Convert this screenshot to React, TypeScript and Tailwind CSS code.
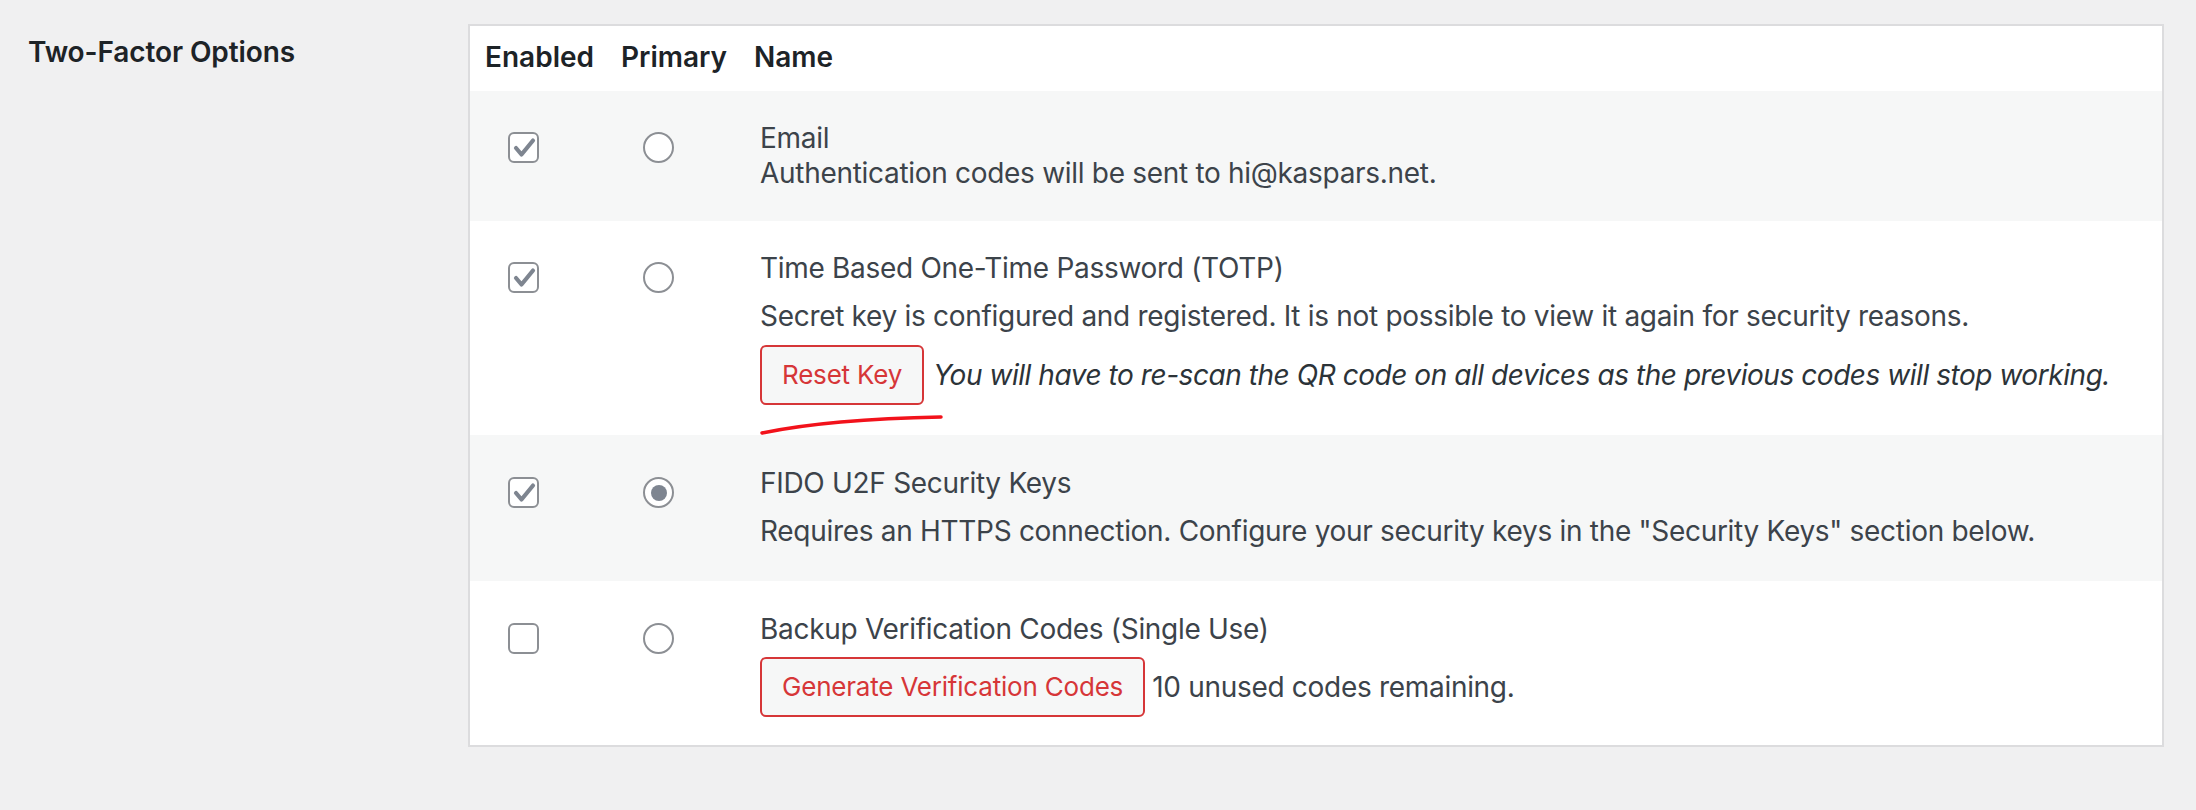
import React from "react";

type Method = {
  id: string;
  enabled: boolean;
  primary: boolean;
  alt: boolean;
};

function Checkbox({ checked }: { checked: boolean }) {
  return (
    <span className="mt-[11px] flex h-[31px] w-[31px] items-center justify-center rounded-[6px] border-2 border-[#8c8f94] bg-white">
      {checked && (
        <svg width="31" height="31" viewBox="0 0 31 31" className="-m-[2px]">
          <polyline
            points="8,16 13.5,22.5 25,8.5"
            fill="none"
            stroke="#7e8590"
            strokeWidth="4.2"
            strokeLinecap="round"
            strokeLinejoin="round"
          />
        </svg>
      )}
    </span>
  );
}

function Radio({ checked }: { checked: boolean }) {
  return (
    <span className="mt-[11px] flex h-[31px] w-[31px] items-center justify-center rounded-full border-2 border-[#8c8f94] bg-white">
      {checked && <span className="h-[16px] w-[16px] rounded-full bg-[#7e8590]" />}
    </span>
  );
}

function RedButton({ children }: { children: React.ReactNode }) {
  return (
    <button className="h-[60px] shrink-0 rounded-[6px] border-2 border-[#d63638] bg-[#f6f7f7] px-[20px] text-[26px] leading-[56px] tracking-[-0.2px] text-[#d63638]">
      {children}
    </button>
  );
}

function Row({
  method,
  pad,
  children,
}: {
  method: Method;
  pad: string;
  children: React.ReactNode;
}) {
  return (
    <div className={`flex ${pad} ${method.alt ? "bg-[#f6f7f7]" : "bg-white"}`}>
      <div className="w-[136px] shrink-0 pl-[38px]">
        <Checkbox checked={method.enabled} />
      </div>
      <div className="w-[134px] shrink-0 pl-[37px]">
        <Radio checked={method.primary} />
      </div>
      <div className="flex-1 pl-[20px] tracking-[-0.3px] text-[#3c434a]">{children}</div>
    </div>
  );
}

const methods: Record<string, Method> = {
  email: { id: "email", enabled: true, primary: false, alt: true },
  totp: { id: "totp", enabled: true, primary: false, alt: false },
  fido: { id: "fido", enabled: true, primary: true, alt: true },
  backup: { id: "backup", enabled: false, primary: false, alt: false },
};

export default function App() {
  return (
    <div className="min-h-screen bg-[#f0f0f1] font-['Inter',sans-serif] text-[28px] leading-[35px]">
      <div className="flex pt-[24px]">
        <div className="w-[468px] shrink-0 pl-[28px] pt-[11px] font-semibold tracking-[-0.1px] text-[#1d2327]">
          Two-Factor Options
        </div>
        <div className="w-[1696px] border-2 border-[#dcdcde] bg-white">
          <div className="flex bg-white pb-[16px] pt-[14px] font-semibold text-[#1d2327]">
            <div className="w-[136px] shrink-0 pl-[15px]">Enabled</div>
            <div className="w-[134px] shrink-0 pl-[15px]">Primary</div>
            <div className="flex-1 pl-[14px]">Name</div>
          </div>

          <Row method={methods.email} pad="pt-[30px] pb-[30px]">
            <div>Email</div>
            <div>Authentication codes will be sent to hi@kaspars.net.</div>
          </Row>

          <Row method={methods.totp} pad="pt-[30px] pb-[30px]">
            <div>Time Based One-Time Password (TOTP)</div>
            <p className="mt-[13px]">
              Secret key is configured and registered. It is not possible to view it again for security reasons.
            </p>
            <div className="relative mt-[11px] flex items-center gap-[9px]">
              <RedButton>Reset Key</RedButton>
              <em className="tracking-[-0.45px] text-[#2c3338]">
                You will have to re-scan the QR code on all devices as the previous codes will stop working.
              </em>
              {/* hand drawn underline */}
              <svg
                className="pointer-events-none absolute left-0 top-[70px]"
                width="190"
                height="24"
                viewBox="0 0 190 24"
              >
                <path
                  d="M2 18 Q 70 4 181 2"
                  fill="none"
                  stroke="#f2121b"
                  strokeWidth="3.5"
                  strokeLinecap="round"
                />
              </svg>
            </div>
          </Row>

          <Row method={methods.fido} pad="pt-[31px] pb-[32px]">
            <div>FIDO U2F Security Keys</div>
            <p className="mt-[13px]">
              Requires an HTTPS connection. Configure your security keys in the "Security Keys" section below.
            </p>
          </Row>

          <Row method={methods.backup} pad="pt-[31px] pb-[28px]">
            <div>Backup Verification Codes (Single Use)</div>
            <div className="mt-[10px] flex items-center gap-[7px]">
              <RedButton>Generate Verification Codes</RedButton>
              <span>10 unused codes remaining.</span>
            </div>
          </Row>
        </div>
      </div>
    </div>
  );
}
